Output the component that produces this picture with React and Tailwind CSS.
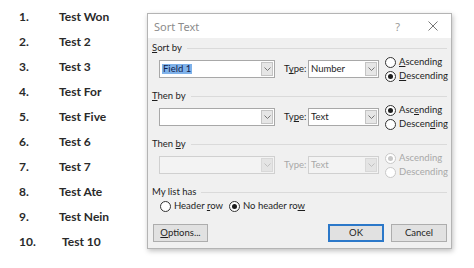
import React from 'react';

const items = ['Test Won', 'Test 2', 'Test 3', 'Test For', 'Test Five', 'Test 6', 'Test 7', 'Test Ate', 'Test Nein', 'Test 10'];

// underline one letter (access key)
function Key({ text, at }) {
  return (
    <>
      {text.slice(0, at)}
      <span className="underline underline-offset-[1px]">{text[at]}</span>
      {text.slice(at + 1)}
    </>
  );
}

function Radio({ checked, disabled }) {
  return (
    <span
      className={`flex h-[11px] w-[11px] shrink-0 items-center justify-center rounded-full border bg-white ${
        disabled ? 'border-[#c8c8c8]' : 'border-[#333]'
      }`}
    >
      {checked && <span className={`h-[5px] w-[5px] rounded-full ${disabled ? 'bg-[#c8c8c8]' : 'bg-[#1e1e1e]'}`} />}
    </span>
  );
}

function Combo({ className, children, disabled }) {
  return (
    <div
      className={`flex h-[18px] shrink-0 border ${
        disabled ? 'border-[#d0d0d0] bg-[#f3f3f3] text-[#a8a8a8]' : 'border-[#a8a8a8] bg-white'
      } ${className}`}
    >
      <div className="flex flex-1 items-center pl-[2px]">{children}</div>
      <div
        className={`my-[1px] mr-[1px] flex w-[12px] items-center justify-center border ${
          disabled ? 'border-[#d8d8d8] bg-[#e4e4e4]' : 'border-[#c4c4c4] bg-[#e6e6e6]'
        }`}
      >
        <svg width="7" height="4" viewBox="0 0 7 4">
          <path d="M0.5 0.5 L3.5 3.5 L6.5 0.5" fill="none" stroke={disabled ? '#c0c0c0' : '#777'} strokeWidth="1" />
        </svg>
      </div>
    </div>
  );
}

function Header({ children }) {
  return (
    <div className="flex h-[14px] items-center pl-[4px]">
      <span className="whitespace-nowrap">{children}</span>
      <span className="ml-[5px] h-px flex-1 bg-[#dadada]" />
    </div>
  );
}

function SortRow({ value, selected, type, typeKey, asc, desc, ascChecked, disabled }) {
  return (
    <div className="flex h-[28px] items-center pl-[11px]">
      <Combo className="w-[116px]" disabled={disabled}>
        {selected ? <span className="bg-[#7fb2ea] px-[1px] text-[#10204a]">{value}</span> : value}
      </Combo>
      <span className={`ml-[9px] w-[24px] shrink-0 whitespace-nowrap ${disabled ? 'text-[#a8a8a8]' : ''}`}>
        {disabled ? 'Type:' : <Key text="Type:" at={typeKey} />}
      </span>
      <Combo className="w-[71px]" disabled={disabled}>
        {type}
      </Combo>
      <div className={`ml-[6px] flex flex-col whitespace-nowrap ${disabled ? 'text-[#a8a8a8]' : ''}`}>
        <div className="flex h-[14px] items-center gap-[3px]">
          <Radio checked={ascChecked} disabled={disabled} />
          <span>{asc}</span>
        </div>
        <div className="flex h-[14px] items-center gap-[3px]">
          <Radio checked={!ascChecked} disabled={disabled} />
          <span>{desc}</span>
        </div>
      </div>
    </div>
  );
}

export default function App() {
  return (
    <div className="flex h-[268px] w-[474px] overflow-hidden bg-white">
      <div className="flex w-[147px] shrink-0 flex-col pt-[4px] font-['Lato',sans-serif] text-[12px] font-bold text-[#2a2a2a]">
        {items.map((t, i) => (
          <div key={t} className="flex h-[25px] items-center pl-[19px]">
            <span className="w-[40px]">{i + 1}.</span>
            <span className={i === 9 ? 'ml-[3px]' : ''}>{t}</span>
          </div>
        ))}
      </div>

      <div className="mt-[13px] flex h-[236px] w-[305px] shrink-0 flex-col border border-[#b4b4b4] bg-[#f0f0f0] font-['Lato',sans-serif] text-[9.5px] leading-none text-[#1e1e1e] shadow-[1px_2px_5px_rgba(0,0,0,0.25)]">
        <div className="flex h-[24px] items-center bg-white pl-[6px] font-['Noto_Sans',sans-serif] text-[11px] text-[#8c8c8c]">
          <span>Sort Text</span>
          <span className="ml-auto mr-[28px] text-[11px] text-[#999]">?</span>
          <svg className="mr-[13px]" width="10" height="10" viewBox="0 0 10 10">
            <path d="M0.5 0.5 L9.5 9.5 M9.5 0.5 L0.5 9.5" stroke="#777" strokeWidth="1" />
          </svg>
        </div>

        <div className="flex flex-1 flex-col pr-[4px] pt-[3px]">
          <Header>
            <Key text="Sort by" at={0} />
          </Header>
          <SortRow
            value="Field 1"
            selected
            type="Number"
            typeKey={1}
            asc={<Key text="Ascending" at={0} />}
            desc={<Key text="Descending" at={0} />}
            ascChecked={false}
          />
          <div className="h-[6px]" />
          <Header>
            <Key text="Then by" at={0} />
          </Header>
          <SortRow
            value=""
            type="Text"
            typeKey={2}
            asc={<Key text="Ascending" at={3} />}
            desc={<Key text="Descending" at={6} />}
            ascChecked
          />
          <div className="h-[6px]" />
          <Header>
            <Key text="Then by" at={5} />
          </Header>
          <SortRow value="" type="Text" asc="Ascending" desc="Descending" ascChecked disabled />
          <div className="h-[6px]" />
          <Header>My list has</Header>
          <div className="flex h-[14px] items-center whitespace-nowrap pl-[12px]">
            <Radio />
            <span className="ml-[3px] w-[55px]">
              <Key text="Header row" at={7} />
            </span>
            <Radio checked />
            <span className="ml-[3px]">
              <Key text="No header row" at={12} />
            </span>
          </div>

          <div className="mt-[11px] flex items-center pl-[5px]">
            <button className="flex h-[18px] w-[55px] items-center justify-center border border-[#adadad] bg-[#e1e1e1]">
              <Key text="Options..." at={0} />
            </button>
            <button className="ml-auto flex h-[18px] w-[56px] items-center justify-center border border-[#2b78c9] bg-[#e1e1e1] shadow-[inset_0_0_0_1px_#2b78c9]">
              OK
            </button>
            <button className="ml-[7px] flex h-[18px] w-[56px] items-center justify-center border border-[#adadad] bg-[#e1e1e1]">
              Cancel
            </button>
          </div>
        </div>
      </div>
    </div>
  );
}
